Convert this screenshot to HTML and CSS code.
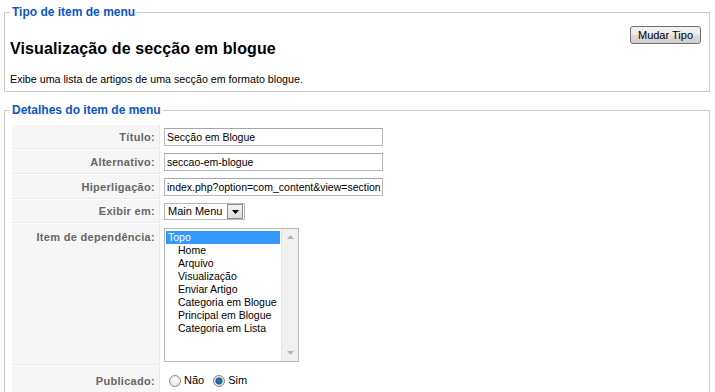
FILE: index.html
```html
<!DOCTYPE html>
<html lang="pt">
<head>
  <meta charset="UTF-8">
  <title>Item de menu</title>
  <link rel="stylesheet" href="styles.css">
</head>
<body>
  <fieldset class="box box-type">
    <legend>Tipo de item de menu</legend>
    <div class="type-action">
      <button type="button" class="btn">Mudar Tipo</button>
    </div>
    <h2>Visualização de secção em blogue</h2>
    <p class="desc">Exibe uma lista de artigos de uma secção em formato blogue.</p>
  </fieldset>

  <fieldset class="box box-details">
    <legend>Detalhes do item de menu</legend>
    <table class="admintable">
      <tr>
        <td class="key">Título:</td>
        <td><input class="text" value="Secção em Blogue"></td>
      </tr>
      <tr>
        <td class="key">Alternativo:</td>
        <td><input class="text" value="seccao-em-blogue"></td>
      </tr>
      <tr>
        <td class="key">Hiperligação:</td>
        <td><input class="text" value="index.php?option=com_content&amp;view=section&amp;layout=blog" readonly></td>
      </tr>
      <tr>
        <td class="key">Exibir em:</td>
        <td>
          <span class="dropdown">
            <span class="dropdown-value">Main Menu</span>
            <span class="dropdown-btn">
              <svg width="7" height="4" viewBox="0 0 7 4"><path d="M0 0h7L3.5 4z" fill="#000"/></svg>
            </span>
          </span>
        </td>
      </tr>
      <tr>
        <td class="key key-top">Item de dependência:</td>
        <td>
          <div class="listbox">
            <ul class="listbox-items">
              <li class="selected">Topo</li>
              <li class="sub">Home</li>
              <li class="sub">Arquivo</li>
              <li class="sub">Visualização</li>
              <li class="sub">Enviar Artigo</li>
              <li class="sub">Categoria em Blogue</li>
              <li class="sub">Principal em Blogue</li>
              <li class="sub">Categoria em Lista</li>
            </ul>
            <div class="scrollbar">
              <svg width="7" height="4" viewBox="0 0 7 4"><path d="M0 4h7L3.5 0z" fill="#b4b4b4"/></svg>
              <svg width="7" height="4" viewBox="0 0 7 4"><path d="M0 0h7L3.5 4z" fill="#b4b4b4"/></svg>
            </div>
          </div>
        </td>
      </tr>
      <tr class="row-radios">
        <td class="key">Publicado:</td>
        <td>
          <label class="radio"><input type="radio" name="published" value="0">Não</label>
          <label class="radio"><input type="radio" name="published" value="1" checked>Sim</label>
        </td>
      </tr>
    </table>
  </fieldset>
</body>
</html>
```

FILE: styles.css
```css
body { margin: 0; padding-top: 5px; background: #fff; font-family: "Liberation Sans", Arial, sans-serif; font-size: 11px; color: #000; }

.box { margin: 0 5px 11px 4px; padding: 0 8px 5px 5px; border: 1px solid #ccc; min-width: 0; }
.box legend { padding: 0 2px; color: #0b55c4; font-size: 12px; font-weight: bold; line-height: 14px; }

.type-action { float: right; margin-top: 7px; }
.btn {
  height: 18px;
  padding: 0 7px;
  border: 1px solid #707070;
  border-radius: 3px;
  background: linear-gradient(#f2f2f2, #ebebeb 50%, #dddddd 51%, #cfcfcf);
  font-family: "Liberation Sans", Arial, sans-serif;
  font-size: 11px;
  color: #000;
}
.box-type h2 { margin: 19px 0 0; font-size: 16px; line-height: 21px; font-weight: bold; letter-spacing: 0.12px; }
.box-type .desc { margin: 14px 0 0; line-height: 13px; font-size: 10.7px; }

.box-details { padding-bottom: 0; }
.admintable { margin: 7px 0 0 1px; border-spacing: 1px; }
.admintable td { padding: 3px; vertical-align: middle; }
.admintable td.key {
  width: 140px;
  padding: 3px 4px 3px 3px;
  background: #f6f6f6;
  border-bottom: 1px solid #e9e9e9;
  border-right: 1px solid #e9e9e9;
  color: #666;
  font-weight: bold;
  letter-spacing: 0.3px;
  text-align: right;
}
.admintable td.key-top { vertical-align: top; padding-top: 7px; }
.row-radios td { height: 24px; }

input.text {
  box-sizing: border-box;
  width: 219px;
  height: 18px;
  padding: 0 2px;
  border: 1px solid #b5b9bf;
  border-top-color: #a3a7ad;
  font-family: "Liberation Sans", Arial, sans-serif;
  font-size: 10.5px;
  color: #000;
}

.dropdown { display: inline-flex; align-items: center; height: 17px; box-sizing: border-box; border: 1px solid #b5b9bf; vertical-align: middle; }
.dropdown-value { padding: 0 5px 0 3px; line-height: 15px; }
.dropdown-btn {
  display: flex; align-items: center; justify-content: center;
  width: 14px; height: 13px; margin-right: 1px;
  border: 1px solid #8d8d8d;
  background: linear-gradient(#f4f4f4, #dcdcdc);
}

.listbox { display: flex; width: 135px; height: 134px; margin-top: 1px; box-sizing: border-box; border: 1px solid #b5b9bf; }
.listbox-items { flex: 1; margin: 0; padding: 2px 1px 0 1px; list-style: none; font-size: 10.5px; }
.listbox-items li { height: 13px; line-height: 13px; padding-left: 2px; white-space: nowrap; }
.listbox-items li.sub { padding-left: 12px; }
.listbox-items li.selected { background: #3399ff; color: #fff; }
.scrollbar {
  display: flex; flex-direction: column; justify-content: space-between; align-items: center;
  width: 17px; padding: 6px 0; box-sizing: border-box;
  background: #f0f0f0; border-left: 1px solid #e4e4e4;
}

.radio { display: inline-flex; align-items: center; line-height: 13px; margin-right: 1px; }
.radio input {
  appearance: none;
  width: 12px; height: 12px; margin: 0 3px 0 5px;
  border: 1px solid #8b8b8b; border-radius: 50%;
  background: radial-gradient(circle at 50% 40%, #fff, #dcdcdc);
}
.radio input:checked { background: radial-gradient(circle, #2f7fc2 0, #1b5b8f 3px, #e8e8e8 4px, #d0d0d0 6px); }
```
